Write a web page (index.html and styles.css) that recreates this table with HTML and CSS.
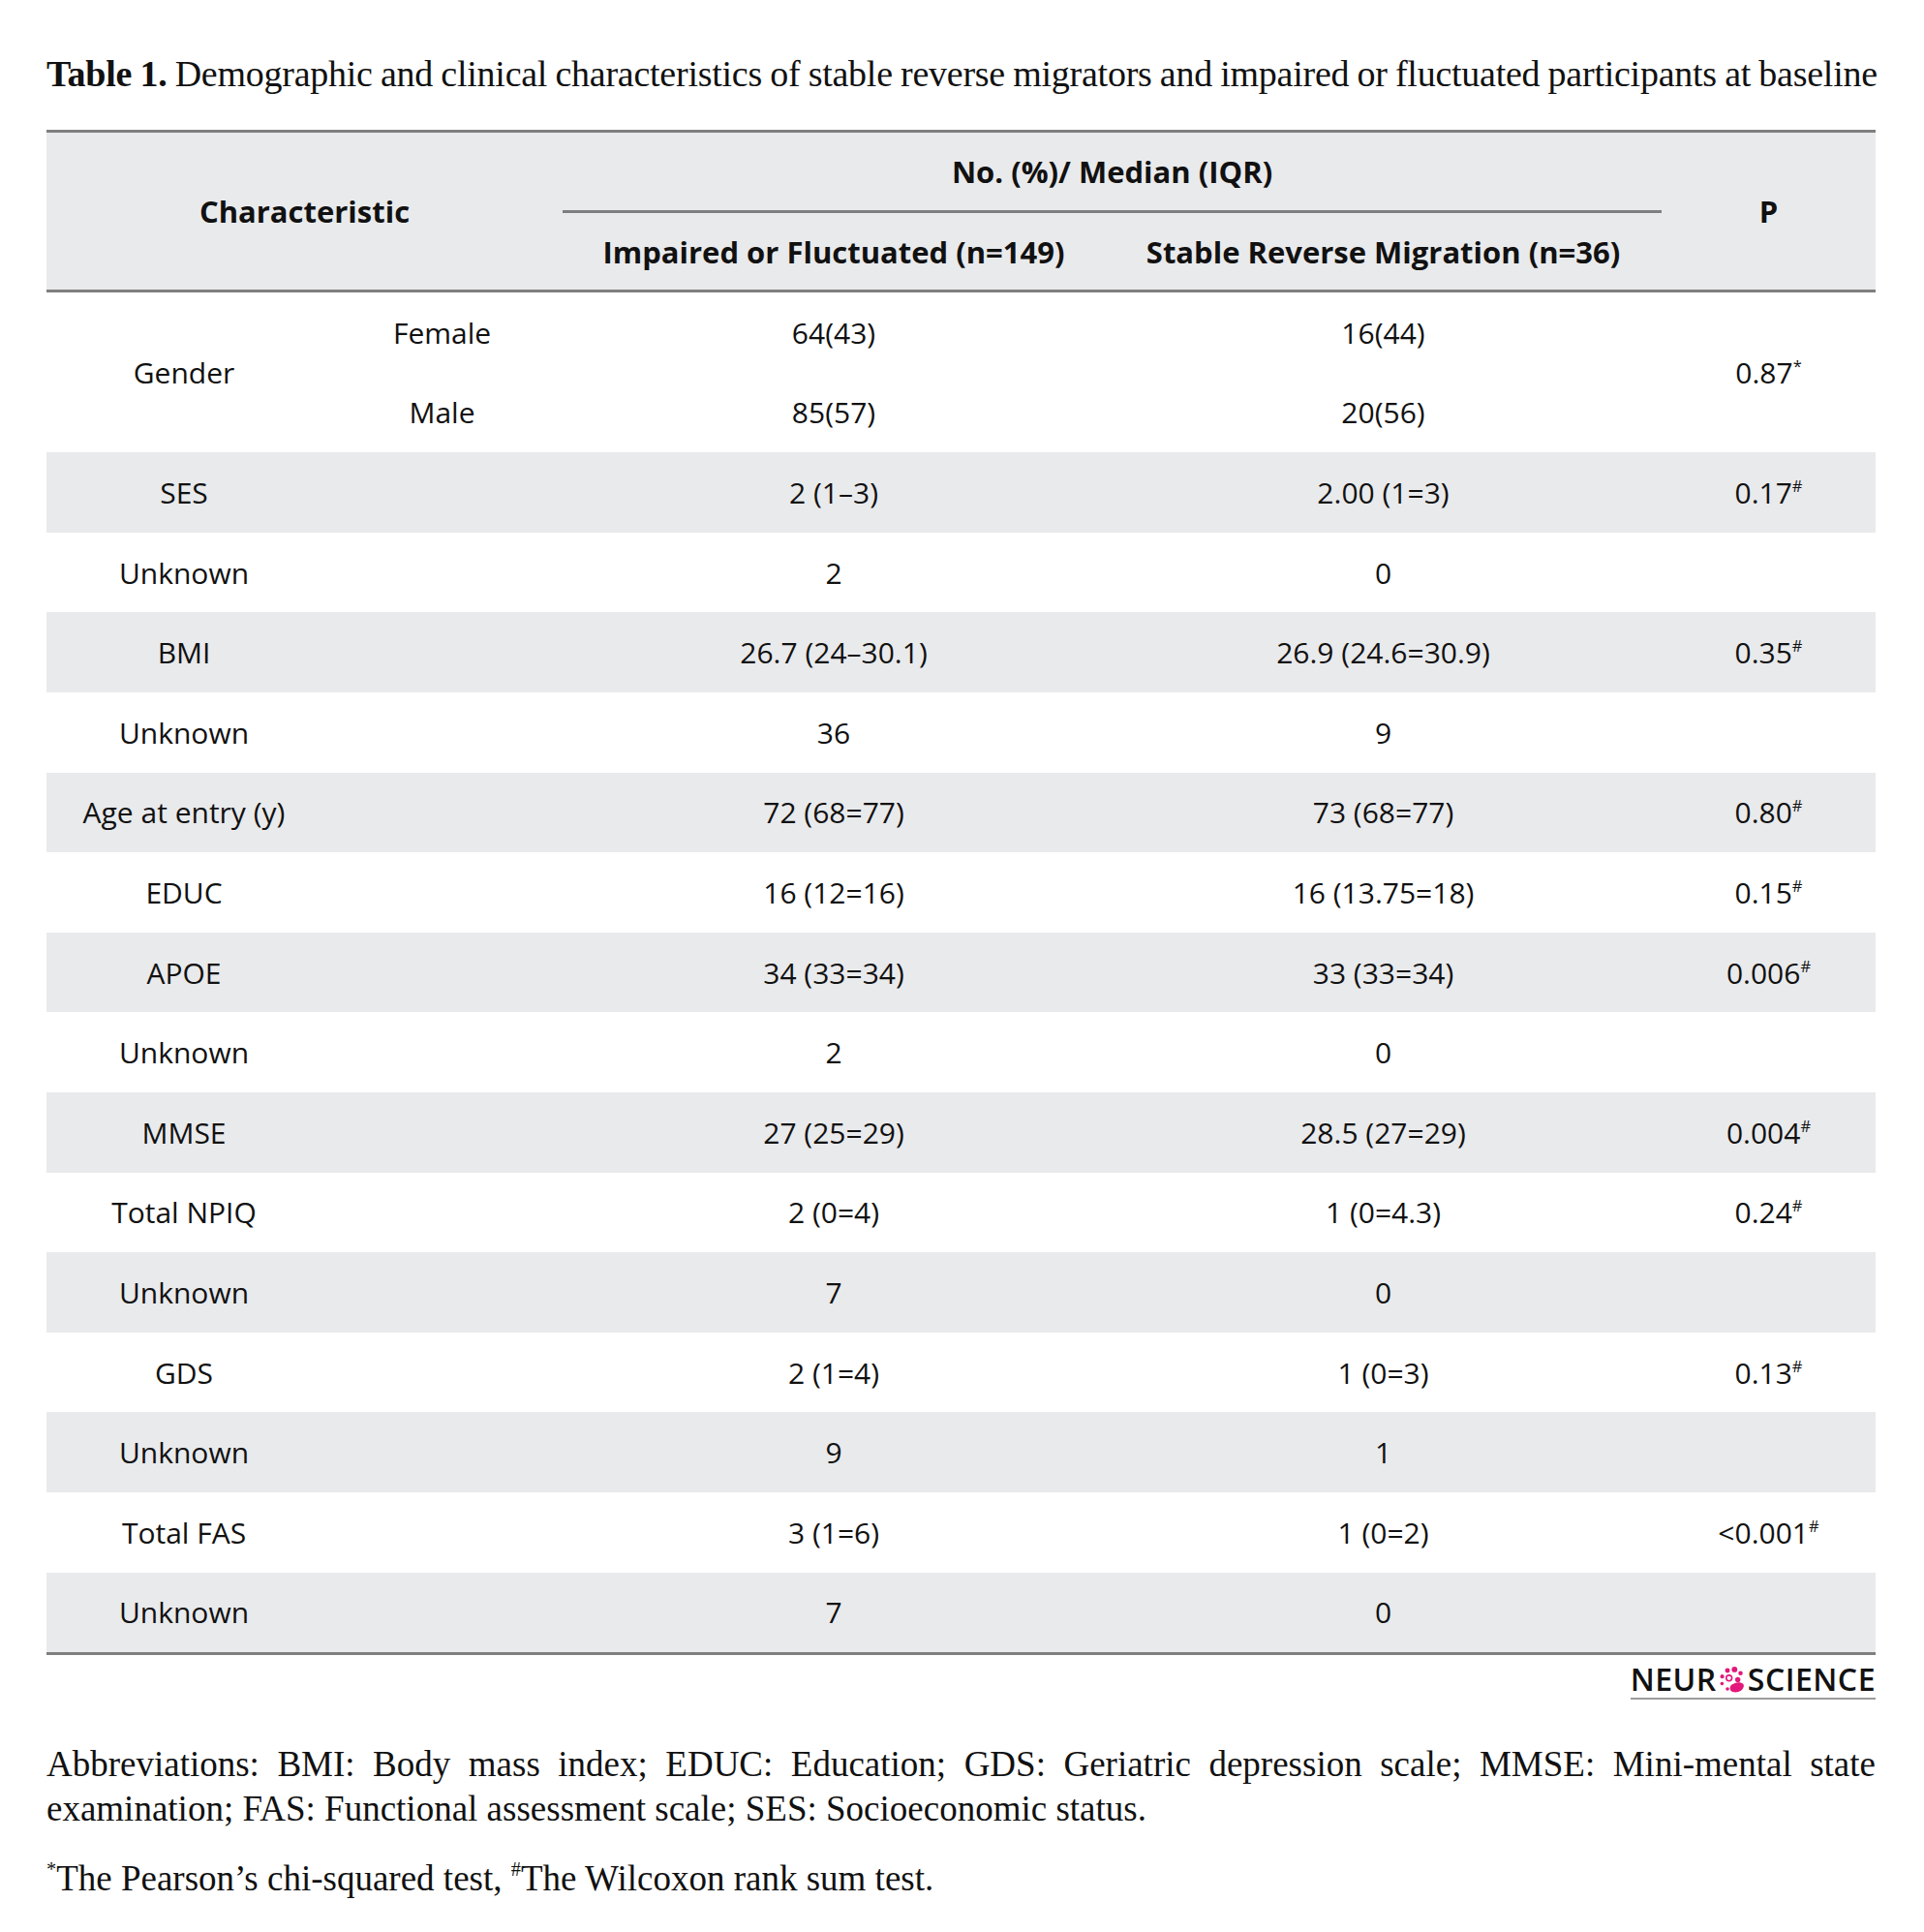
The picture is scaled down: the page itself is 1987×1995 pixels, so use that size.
FILE: index.html
```html
<!DOCTYPE html>
<html lang="en">
<head>
<meta charset="utf-8">
<title>Table 1</title>
<link rel="stylesheet" href="styles.css">
</head>
<body>
<div class="page">
  <p class="caption"><b>Table 1.</b> Demographic and clinical characteristics of stable reverse migrators and impaired or fluctuated participants at baseline</p>
  <table class="data">
    <colgroup>
      <col class="c1"><col class="c2"><col class="c3"><col class="c4"><col class="c5">
    </colgroup>
    <thead>
      <tr class="h1">
        <th colspan="2" rowspan="2" class="hb">Characteristic</th>
        <th colspan="2" class="span">No. (%)/ Median (IQR)</th>
        <th rowspan="2" class="hb">P</th>
      </tr>
      <tr class="h2">
        <th class="hb">Impaired or Fluctuated (n=149)</th>
        <th class="hb">Stable Reverse Migration (n=36)</th>
      </tr>
    </thead>
    <tbody>
      <tr><td rowspan="2">Gender</td><td>Female</td><td>64(43)</td><td>16(44)</td><td rowspan="2">0.87<sup>*</sup></td></tr>
      <tr><td>Male</td><td>85(57)</td><td>20(56)</td></tr>
      <tr class="g"><td>SES</td><td></td><td>2 (1–3)</td><td>2.00 (1=3)</td><td>0.17<sup>#</sup></td></tr>
      <tr><td>Unknown</td><td></td><td>2</td><td>0</td><td></td></tr>
      <tr class="g"><td>BMI</td><td></td><td>26.7 (24–30.1)</td><td>26.9 (24.6=30.9)</td><td>0.35<sup>#</sup></td></tr>
      <tr><td>Unknown</td><td></td><td>36</td><td>9</td><td></td></tr>
      <tr class="g"><td>Age at entry (y)</td><td></td><td>72 (68=77)</td><td>73 (68=77)</td><td>0.80<sup>#</sup></td></tr>
      <tr><td>EDUC</td><td></td><td>16 (12=16)</td><td>16 (13.75=18)</td><td>0.15<sup>#</sup></td></tr>
      <tr class="g"><td>APOE</td><td></td><td>34 (33=34)</td><td>33 (33=34)</td><td>0.006<sup>#</sup></td></tr>
      <tr><td>Unknown</td><td></td><td>2</td><td>0</td><td></td></tr>
      <tr class="g"><td>MMSE</td><td></td><td>27 (25=29)</td><td>28.5 (27=29)</td><td>0.004<sup>#</sup></td></tr>
      <tr><td>Total NPIQ</td><td></td><td>2 (0=4)</td><td>1 (0=4.3)</td><td>0.24<sup>#</sup></td></tr>
      <tr class="g"><td>Unknown</td><td></td><td>7</td><td>0</td><td></td></tr>
      <tr><td>GDS</td><td></td><td>2 (1=4)</td><td>1 (0=3)</td><td>0.13<sup>#</sup></td></tr>
      <tr class="g"><td>Unknown</td><td></td><td>9</td><td>1</td><td></td></tr>
      <tr><td>Total FAS</td><td></td><td>3 (1=6)</td><td>1 (0=2)</td><td>&lt;0.001<sup>#</sup></td></tr>
      <tr class="g last"><td>Unknown</td><td></td><td>7</td><td>0</td><td></td></tr>
    </tbody>
  </table>
  <div class="brand">
    <span class="logo">NEUR<svg class="orb" viewBox="0 0 24 24" aria-hidden="true"><circle cx="8" cy="3.5" r="2.2" fill="#e3177b"/><circle cx="14.5" cy="2.6" r="2.6" fill="#e3177b"/><circle cx="20" cy="6" r="2" fill="#e3177b"/><circle cx="3.2" cy="9" r="1.8" fill="#e3177b"/><circle cx="9.5" cy="10.5" r="2.6" fill="none" stroke="#e3177b" stroke-width="1.4"/><circle cx="17.5" cy="12" r="2.4" fill="#e3177b"/><circle cx="3" cy="15.5" r="1.6" fill="#e3177b"/><path d="M12 16.5c3-2.5 8.5-3 10.5-.5c1.5 2-.5 6-4.5 7.2c-3.2 1-7.2-.2-7.6-2.6c-.3-1.5.4-3 1.6-4.1z" fill="#e3177b"/><circle cx="8" cy="20.5" r="1.6" fill="#e3177b"/></svg>SCIENCE</span>
  </div>
  <p class="abbr">Abbreviations: BMI: Body mass index; EDUC: Education; GDS: Geriatric depression scale; MMSE: Mini-mental state examination; FAS: Functional assessment scale; SES: Socioeconomic status.</p>
  <p class="foot"><sup>*</sup>The Pearson’s chi-squared test, <sup>#</sup>The Wilcoxon rank sum test.</p>
</div>
</body>
</html>
```
FILE: styles.css
```css
html, body {
  margin: 0;
  padding: 0;
  background: #ffffff;
  color: #111111;
}

.page {
  width: 1889px;
  padding: 54px 48px 0 48px;
}

.caption {
  margin: 0;
  font-family: "Liberation Serif", "Times New Roman", serif;
  font-size: 38px;
  line-height: 44px;
  white-space: nowrap;
  letter-spacing: -0.25px;
  word-spacing: -1px;
}

.caption b {
  font-weight: 700;
}

.data {
  margin-top: 36px;
  width: 1889px;
  border-collapse: collapse;
  table-layout: fixed;
  font-family: "Open Sans", "Liberation Sans", sans-serif;
  font-size: 30px;
  color: #111111;
}

.c1 { width: 284px; }
.c2 { width: 249px; }
.c3 { width: 560px; }
.c4 { width: 575px; }
.c5 { width: 221px; }

.data thead th {
  background: #e9eaec;
  font-weight: 700;
  font-size: 31px;
  text-align: center;
  vertical-align: middle;
  padding: 0;
}

.data .h1 th {
  border-top: 3px solid #7f7f7f;
  height: 80px;
}

.data .h2 th {
  height: 79px;
}

.data th.span {
  border-bottom: 3px solid #7f7f7f;
}

.data th.hb {
  border-bottom: 3px solid #7f7f7f;
}

.data td {
  height: 82.6px;
  padding: 0;
  text-align: center;
  vertical-align: middle;
}

.data tr.g td {
  background: #e9eaec;
}

.data tr.last td {
  border-bottom: 3px solid #7f7f7f;
}

.data sup,
.foot sup {
  font-size: 0.55em;
  line-height: 0;
  vertical-align: 0.75em;
}

.brand {
  display: flex;
  justify-content: flex-end;
  margin-top: 10px;
}

.logo {
  display: inline-flex;
  align-items: center;
  font-family: "Open Sans", "Liberation Sans", sans-serif;
  font-weight: 600;
  font-size: 32px;
  line-height: 30px;
  letter-spacing: 0.5px;
  color: #111111;
  border-bottom: 2px solid #9a9a9a;
  padding: 0 0 4px 0;
}

.orb {
  width: 27px;
  height: 27px;
  margin: 0 3px 0 2px;
}

.abbr {
  margin: 44px 0 0 0;
  font-family: "Liberation Serif", "Times New Roman", serif;
  font-size: 37px;
  line-height: 46px;
  text-align: justify;
  color: #111111;
}

.foot {
  margin: 26px 0 0 0;
  font-family: "Liberation Serif", "Times New Roman", serif;
  font-size: 37px;
  line-height: 46px;
  color: #111111;
}
```
